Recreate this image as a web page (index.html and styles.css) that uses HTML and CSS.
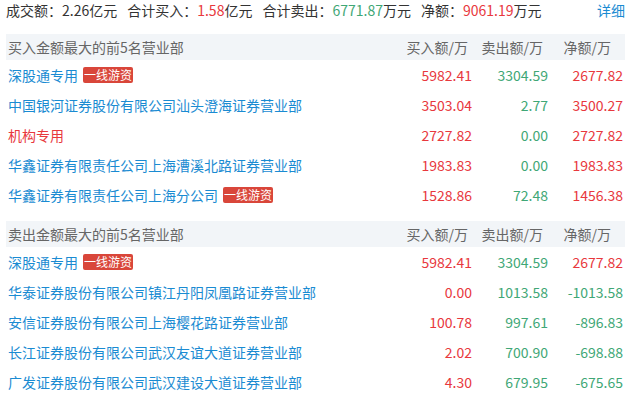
FILE: index.html
```html
<!DOCTYPE html>
<html>
<head>
<meta charset="utf-8">
<link rel="stylesheet" href="styles.css">
</head>
<body>
<div class="wrap">
  <div class="summary">
    <span class="item">成交额：2.26亿元</span>
    <span class="item">合计买入：<span class="up">1.58</span>亿元</span>
    <span class="item">合计卖出：<span class="down">6771.87</span>万元</span>
    <span class="item">净额：<span class="up">9061.19</span>万元</span>
    <a class="detail">详细</a>
  </div>

  <div class="section">
    <div class="row head">
      <div class="name">买入金额最大的前5名营业部</div>
      <div class="c1 h1">买入额/万</div>
      <div class="c2 h2">卖出额/万</div>
      <div class="c3 h3">净额/万</div>
    </div>
    <div class="row">
      <div class="name"><a class="link">深股通专用</a><span class="badge">一线游资</span></div>
      <div class="c1 up">5982.41</div><div class="c2 down">3304.59</div><div class="c3 up">2677.82</div>
    </div>
    <div class="row">
      <div class="name"><a class="link">中国银河证券股份有限公司汕头澄海证券营业部</a></div>
      <div class="c1 up">3503.04</div><div class="c2 down">2.77</div><div class="c3 up">3500.27</div>
    </div>
    <div class="row">
      <div class="name"><a class="link red">机构专用</a></div>
      <div class="c1 up">2727.82</div><div class="c2 down">0.00</div><div class="c3 up">2727.82</div>
    </div>
    <div class="row">
      <div class="name"><a class="link">华鑫证券有限责任公司上海漕溪北路证券营业部</a></div>
      <div class="c1 up">1983.83</div><div class="c2 down">0.00</div><div class="c3 up">1983.83</div>
    </div>
    <div class="row">
      <div class="name"><a class="link">华鑫证券有限责任公司上海分公司</a><span class="badge">一线游资</span></div>
      <div class="c1 up">1528.86</div><div class="c2 down">72.48</div><div class="c3 up">1456.38</div>
    </div>
  </div>

  <div class="section second">
    <div class="row head">
      <div class="name">卖出金额最大的前5名营业部</div>
      <div class="c1 h1">买入额/万</div>
      <div class="c2 h2">卖出额/万</div>
      <div class="c3 h3">净额/万</div>
    </div>
    <div class="row">
      <div class="name"><a class="link">深股通专用</a><span class="badge">一线游资</span></div>
      <div class="c1 up">5982.41</div><div class="c2 down">3304.59</div><div class="c3 up">2677.82</div>
    </div>
    <div class="row">
      <div class="name"><a class="link">华泰证券股份有限公司镇江丹阳凤凰路证券营业部</a></div>
      <div class="c1 up">0.00</div><div class="c2 down">1013.58</div><div class="c3 down">-1013.58</div>
    </div>
    <div class="row">
      <div class="name"><a class="link">安信证券股份有限公司上海樱花路证券营业部</a></div>
      <div class="c1 up">100.78</div><div class="c2 down">997.61</div><div class="c3 down">-896.83</div>
    </div>
    <div class="row">
      <div class="name"><a class="link">长江证券股份有限公司武汉友谊大道证券营业部</a></div>
      <div class="c1 up">2.02</div><div class="c2 down">700.90</div><div class="c3 down">-698.88</div>
    </div>
    <div class="row">
      <div class="name"><a class="link">广发证券股份有限公司武汉建设大道证券营业部</a></div>
      <div class="c1 up">4.30</div><div class="c2 down">679.95</div><div class="c3 down">-675.65</div>
    </div>
  </div>
</div>
</body>
</html>
```

FILE: styles.css
```css
* { box-sizing: border-box; }
html, body { margin: 0; padding: 0; background: #fff; }
body {
  font-family: "Microsoft YaHei", "Noto Sans CJK SC", "Noto Sans", sans-serif;
  font-size: 14px;
  color: #333;
  overflow: hidden;
}
.wrap {
  width: 619px;
  margin-left: 6px;
}
.summary {
  display: flex;
  align-items: center;
  height: 20px;
  line-height: 20px;
  margin-bottom: 14px;
  white-space: nowrap;
}
.summary .item { margin-right: 10px; }
.detail {
  margin-left: auto;
  color: #1a8bd2;
  text-decoration: none;
}
.up { color: #e8383d; }
.down { color: #3fa776; }
.section.second { margin-top: 11px; }
.row {
  display: grid;
  grid-template-columns: 1fr 80px 76px 75px;
  align-items: center;
  height: 30px;
  white-space: nowrap;
}
.row.head {
  height: 26px;
  background: #f2f5f8;
  color: #666;
}
.name {
  padding-left: 2px;
  display: flex;
  align-items: center;
}
.c1, .c2, .c3 {
  text-align: right;
  padding-right: 2px;
}
.h1 { padding-right: 6px; }
.h2 { padding-right: 7px; }
.h3 { padding-right: 14px; }
.link {
  color: #1a8bd2;
  text-decoration: none;
}
.link.red { color: #e8383d; }
.badge {
  display: inline-block;
  margin-left: 5px;
  height: 16px;
  line-height: 16px;
  padding: 0 1px;
  background: #d9463a;
  color: #fff;
  font-size: 12px;
  border-radius: 2px;
}
```
